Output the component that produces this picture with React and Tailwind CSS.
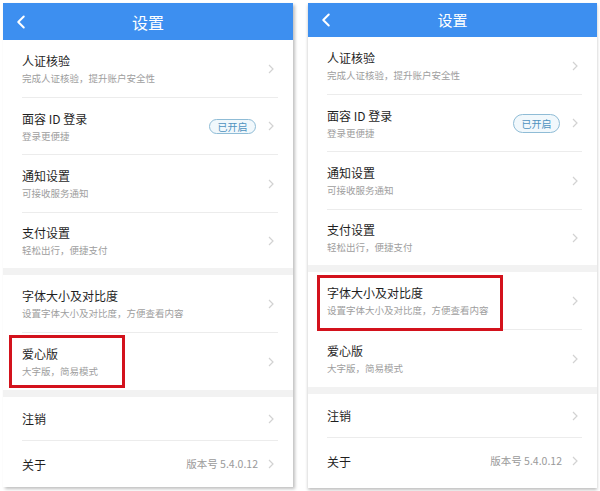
import { ChevronLeft } from "lucide-react"

const Arrow = () => (
  <svg width="6" height="10" viewBox="0 0 6 10" className="shrink-0">
    <path d="M1 1l4 4-4 4" fill="none" stroke="#d2d2d2" strokeWidth="1.2" />
  </svg>
)

const Row = ({ title, sub, h, badge, badgeH, right, divider, mark }) => (
  <div className="relative">
    <div className={`flex items-center pl-[19px] pr-[19px] ${h}`}>
      <div className="flex-1 min-w-0 pt-[1px]">
        <div className="text-[12px] leading-[16px] text-[#1f1f1f]">{title}</div>
        {sub && <div className="mt-[3px] text-[9.5px] leading-[13px] text-[#9e9e9e]">{sub}</div>}
      </div>
      {badge && (
        <span className={`mr-[12px] flex w-[47px] items-center justify-center rounded-full border border-[#8fbcd6] bg-[#f1f8fc] text-[10px] text-[#4f93bf] ${badgeH}`}>
          已开启
        </span>
      )}
      {right && <span className="mr-[10px] text-[10.5px] text-[#9a9a9a]">{right}</span>}
      <Arrow />
    </div>
    {divider && <div className="ml-[19px] mr-[15px] h-px bg-[#ececec]" />}
    {mark && <div className={`absolute border-[3px] border-[#d3121c] ${mark}`} />}
  </div>
)

const Gap = () => <div className="h-[7px] bg-[#f2f2f2]" />

const Phone = ({ w, headerH, titleSize, badgeH, markA, markB, shadow }) => (
  <div className={`flex flex-col bg-white ${w} ${shadow}`}>
    <div className={`relative flex items-center justify-center bg-[#3d8ff0] ${headerH}`}>
      <ChevronLeft className="absolute left-[7px] h-[22px] w-[22px] text-white" strokeWidth={2.2} />
      <span className={`text-white ${titleSize}`}>设置</span>
    </div>
    <Row title="人证核验" sub="完成人证核验，提升账户安全性" h="h-[57px]" divider />
    <Row title="面容 ID 登录" sub="登录更便捷" h="h-[56px]" badge badgeH={badgeH} divider />
    <Row title="通知设置" sub="可接收服务通知" h="h-[57px]" divider />
    <Row title="支付设置" sub="轻松出行，便捷支付" h="h-[55px]" />
    <Gap />
    <Row title="字体大小及对比度" sub="设置字体大小及对比度，方便查看内容" h="h-[57px]" divider mark={markB} />
    <Row title="爱心版" sub="大字版，简易模式" h="h-[57px]" mark={markA} />
    <Gap />
    <Row title="注销" h="h-[43px]" divider />
    <Row title="关于" h="h-[46px]" right="版本号 5.4.0.12" />
  </div>
)

export default function App() {
  return (
    <div
      className="flex h-[491px] w-[600px] gap-[15px] overflow-hidden bg-white pl-[3px] pt-[3px]"
      style={{ fontFamily: '"Noto Sans CJK SC", "Noto Sans", sans-serif' }}
    >
      <Phone
        w="w-[290px] h-[484px]"
        headerH="h-[37px]"
        titleSize="text-[16px]"
        badgeH="h-[15px]"
        markA="left-[6px] top-[2px] h-[53px] w-[116px]"
        shadow="shadow-[2px_2px_3px_rgba(0,0,0,0.25)]"
      />
      <Phone
        w="w-[289px] h-[485px]"
        headerH="h-[34px]"
        titleSize="text-[15px]"
        badgeH="h-[19px]"
        markB="left-[9px] top-[3px] h-[56px] w-[186px]"
        shadow="shadow-[0_2px_3px_rgba(0,0,0,0.25)]"
      />
    </div>
  )
}
